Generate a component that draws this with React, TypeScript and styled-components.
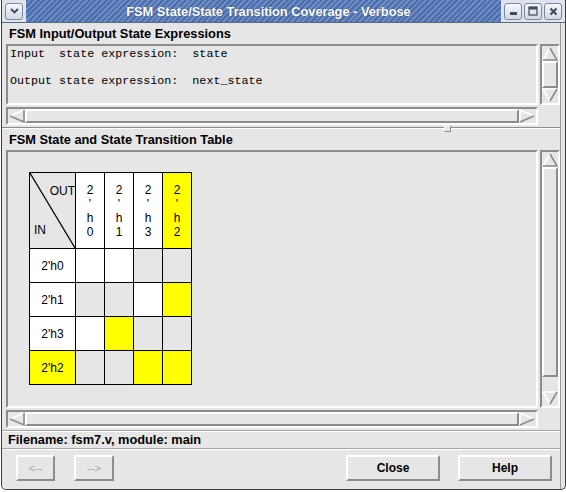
import * as React from 'react';
import styled, { createGlobalStyle } from 'styled-components';

const bg = '#e6e6e6';
const shade = '#8c8c8c';
const light = '#ffffff';
const yellow = '#ffff00';

type Tone = 'white' | 'grey' | 'yellow';
const tones: Record<Tone, string> = { white: '#ffffff', grey: bg, yellow };

const GlobalStyle = createGlobalStyle`
  html, body { margin: 0; padding: 0; background: #ffffff; }
  body { font-family: "Liberation Sans", Arial, sans-serif; }
`;

const Window = styled.div`
  box-sizing: border-box;
  width: 565px;
  height: 490px;
  margin-left: 1px;
  background: ${bg};
  border: 1px solid #3d3d3d;
  border-top: none;
  border-radius: 0 0 5px 5px;
  display: flex;
  flex-direction: column;
  overflow: hidden;
`;

const TitleBar = styled.div`
  box-sizing: border-box;
  height: 23px;
  display: flex;
  background: #dfe4ec;
  border-bottom: 1px solid #5a6884;
`;

const MenuSlot = styled.div`
  width: 24px;
  display: flex;
  align-items: center;
  justify-content: center;
`;

const TitleStripes = styled.div`
  flex: 1;
  display: flex;
  align-items: center;
  justify-content: center;
  padding-left: 10px;
  background: repeating-linear-gradient(135deg, #4c6dab 0 2px, #6d8cc4 2px 4px);
  color: #ffffff;
  font: bold 12.8px "Liberation Sans", Arial, sans-serif;
  text-shadow: 0 0 1px #2c3f66;
`;

const WinButtons = styled.div`
  display: flex;
  align-items: center;
  gap: 2px;
  padding: 0 3px 0 3px;
`;

const WinButton = styled.div`
  box-sizing: border-box;
  width: 18px;
  height: 17px;
  border: 1px solid #7b88a1;
  border-radius: 3px;
  background: linear-gradient(#f5f7fa, #d3d9e4);
  display: flex;
  align-items: center;
  justify-content: center;
`;

const Content = styled.div`
  flex: 1;
  display: flex;
  flex-direction: column;
  margin-right: 4px;
  border-right: 1px solid #9a9a9a;
`;

const SectionLabel = styled.div<{ $h: number; $lift?: number }>`
  box-sizing: border-box;
  height: ${(p) => p.$h}px;
  display: flex;
  align-items: center;
  padding-left: 7px;
  padding-bottom: ${(p) => p.$lift ?? 0}px;
  font: bold 12.8px "Liberation Sans", Arial, sans-serif;
  color: #000000;
`;

const ScrollArea = styled.div<{ $boxHeight: number }>`
  display: grid;
  grid-template-columns: 1fr 20px;
  grid-template-rows: ${(p) => p.$boxHeight}px 18px;
  gap: 2px;
  padding-left: 4px;
`;

const Sunken = styled.div`
  box-sizing: border-box;
  border: 2px solid;
  border-color: ${shade} ${light} ${light} ${shade};
  background: ${bg};
  overflow: hidden;
`;

const TextBox = styled(Sunken)`
  padding: 2px 2px;
  font: 11.7px "Liberation Mono", "Courier New", monospace;
  line-height: 13.5px;
  white-space: pre;
  color: #000000;
`;

const TableBox = styled(Sunken)`
  padding: 20px 21px;
`;

const VScroll = styled(Sunken)`
  display: flex;
  flex-direction: column;
  align-items: stretch;
  padding: 1px 0;
`;

const HScroll = styled(Sunken)`
  display: flex;
  align-items: stretch;
  padding: 0 1px;
`;

const Thumb = styled.div<{ $grow: number }>`
  box-sizing: border-box;
  flex: ${(p) => p.$grow} 1 0;
  border: 2px solid;
  border-color: ${light} ${shade} ${shade} ${light};
  background: ${bg};
`;

const Gap = styled.div<{ $grow: number }>`
  flex: ${(p) => p.$grow} 1 0;
`;

const Sash = styled.div`
  height: 6px;
  display: flex;
  align-items: center;
`;

const Groove = styled.div<{ $w?: number }>`
  box-sizing: border-box;
  height: 2px;
  flex: ${(p) => (p.$w ? `0 0 ${p.$w}px` : '1')};
  border-top: 1px solid ${shade};
  border-bottom: 1px solid ${light};
`;

const SashHandle = styled.div`
  box-sizing: border-box;
  width: 7px;
  height: 7px;
  border: 1px solid;
  border-color: ${light} ${shade} ${shade} ${light};
  background: ${bg};
`;

const Grid = styled.div`
  display: grid;
  grid-template-columns: 45px repeat(4, 28px);
  grid-template-rows: 75px repeat(4, 33px);
  gap: 1px;
  padding: 1px;
  background: #000000;
  width: max-content;
`;

const Cell = styled.div<{ $tone: Tone }>`
  background: ${(p) => tones[p.$tone]};
  display: flex;
  align-items: center;
  justify-content: center;
  font: 12px "Liberation Sans", Arial, sans-serif;
  color: #000000;
`;

const HeadCell = styled(Cell)`
  flex-direction: column;
  line-height: 14px;
`;

const Corner = styled.div`
  position: relative;
  background: ${bg};
  display: flex;
  flex-direction: column;
  justify-content: space-between;
  padding: 11px 0 11px 4px;
  font: 12px "Liberation Sans", Arial, sans-serif;
  line-height: 14px;
  color: #000000;
`;

const CornerOut = styled.span`
  align-self: flex-end;
`;

const Diagonal = styled.svg`
  position: absolute;
  left: 0;
  top: 0;
`;

const FileBar = styled.div`
  box-sizing: border-box;
  margin-top: 2px;
  height: 19px;
  display: flex;
  align-items: center;
  padding-left: 6px;
  border-top: 1px solid #a6a6a6;
  border-bottom: 1px solid #a6a6a6;
  box-shadow: 0 1px 0 ${light}, inset 0 1px 0 ${light};
  font: bold 12.8px "Liberation Sans", Arial, sans-serif;
  color: #000000;
`;

const ButtonRow = styled.div`
  flex: 1;
  display: flex;
  align-items: flex-start;
  padding: 6px 8px 0 14px;
`;

const Button = styled.div<{ $w: number; $disabled?: boolean; $ml?: number }>`
  box-sizing: border-box;
  width: ${(p) => p.$w}px;
  height: 26px;
  margin-left: ${(p) => p.$ml ?? 0}px;
  display: flex;
  align-items: center;
  justify-content: center;
  border: 2px solid;
  border-color: ${light} ${shade} ${shade} ${light};
  background: ${bg};
  font: ${(p) => (p.$disabled ? '11px' : 'bold 12px')} "Liberation Sans", Arial, sans-serif;
  color: ${(p) => (p.$disabled ? '#a4a4a4' : '#000000')};
`;

const Spacer = styled.div`
  flex: 1;
`;

function Arrow({ dir }: { dir: 'up' | 'down' | 'left' | 'right' }) {
  const w = 16;
  const h = 14;
  let lightPts = '';
  let darkPts = '';
  if (dir === 'up') {
    lightPts = '1,13 8,1';
    darkPts = '8,1 15,13 1,13';
  } else if (dir === 'down') {
    lightPts = '8,13 1,1 15,1';
    darkPts = '15,1 8,13';
  } else if (dir === 'left') {
    lightPts = '1,7 15,1';
    darkPts = '15,1 15,13 1,7';
  } else {
    lightPts = '15,7 1,1 1,13';
    darkPts = '1,13 15,7';
  }
  return (
    <svg width={w} height={h} viewBox={`0 0 ${w} ${h}`} style={{ flex: 'none', display: 'block' }}>
      <polyline points={lightPts} fill="none" stroke={light} strokeWidth="1.6" />
      <polyline points={darkPts} fill="none" stroke={shade} strokeWidth="1.6" />
    </svg>
  );
}

function VerticalBar({ thumb, rest }: { thumb: number; rest: number }) {
  return (
    <VScroll>
      <Arrow dir="up" />
      <Thumb $grow={thumb} />
      {rest > 0 && <Gap $grow={rest} />}
      <Arrow dir="down" />
    </VScroll>
  );
}

function HorizontalBar() {
  return (
    <HScroll>
      <Arrow dir="left" />
      <Thumb $grow={1} />
      <Arrow dir="right" />
    </HScroll>
  );
}

const columns: { label: string; tone: Tone }[] = [
  { label: "2'h0", tone: 'white' },
  { label: "2'h1", tone: 'white' },
  { label: "2'h3", tone: 'white' },
  { label: "2'h2", tone: 'yellow' },
];

const rows: { label: string; tone: Tone; cells: Tone[] }[] = [
  { label: "2'h0", tone: 'white', cells: ['white', 'white', 'grey', 'grey'] },
  { label: "2'h1", tone: 'white', cells: ['grey', 'grey', 'white', 'yellow'] },
  { label: "2'h3", tone: 'white', cells: ['white', 'yellow', 'grey', 'grey'] },
  { label: "2'h2", tone: 'yellow', cells: ['grey', 'grey', 'yellow', 'yellow'] },
];

function TransitionTable() {
  return (
    <Grid>
      <Corner>
        <Diagonal width="45" height="75" viewBox="0 0 45 75">
          <line x1="0" y1="0" x2="45" y2="75" stroke="#000" strokeWidth="1.2" />
        </Diagonal>
        <CornerOut>OUT</CornerOut>
        <span>IN</span>
      </Corner>
      {columns.map((c) => (
        <HeadCell key={c.label} $tone={c.tone}>
          {c.label.split('').map((ch, i) => (
            <span key={i}>{ch}</span>
          ))}
        </HeadCell>
      ))}
      {rows.map((r) => (
        <React.Fragment key={r.label}>
          <Cell $tone={r.tone}>{r.label}</Cell>
          {r.cells.map((t, i) => (
            <Cell key={i} $tone={t} />
          ))}
        </React.Fragment>
      ))}
    </Grid>
  );
}

export default function App() {
  return (
    <>
      <GlobalStyle />
      <Window>
        <TitleBar>
          <MenuSlot>
            <WinButton>
              <svg width="9" height="6" viewBox="0 0 9 6">
                <polyline points="1,1 4.5,4.5 8,1" fill="none" stroke="#3f4a5e" strokeWidth="1.8" />
              </svg>
            </WinButton>
          </MenuSlot>
          <TitleStripes>FSM State/State Transition Coverage - Verbose</TitleStripes>
          <WinButtons>
            <WinButton>
              <svg width="9" height="9" viewBox="0 0 9 9">
                <rect x="1" y="5" width="7" height="3" fill="#3f4a5e" />
              </svg>
            </WinButton>
            <WinButton>
              <svg width="10" height="10" viewBox="0 0 10 10">
                <rect x="1" y="1" width="8" height="8" fill="none" stroke="#3f4a5e" strokeWidth="1.2" />
                <rect x="1" y="1" width="8" height="2.5" fill="#3f4a5e" />
              </svg>
            </WinButton>
            <WinButton>
              <svg width="9" height="9" viewBox="0 0 9 9">
                <path d="M1.5 1.5 L7.5 7.5 M7.5 1.5 L1.5 7.5" stroke="#3f4a5e" strokeWidth="2" />
              </svg>
            </WinButton>
          </WinButtons>
        </TitleBar>
        <Content>
          <SectionLabel $h={21}>FSM Input/Output State Expressions</SectionLabel>
          <ScrollArea $boxHeight={61}>
            <TextBox>{'Input  state expression:  state\n\nOutput state expression:  next_state'}</TextBox>
            <VerticalBar thumb={1} rest={0} />
            <HorizontalBar />
          </ScrollArea>
          <Sash>
            <Groove />
            <SashHandle />
            <Groove $w={109} />
          </Sash>
          <SectionLabel $h={19} $lift={3}>FSM State and State Transition Table</SectionLabel>
          <ScrollArea $boxHeight={258}>
            <TableBox>
              <TransitionTable />
            </TableBox>
            <VerticalBar thumb={15} rest={1} />
            <HorizontalBar />
          </ScrollArea>
          <FileBar>Filename: fsm7.v, module: main</FileBar>
          <ButtonRow>
            <Button $w={39} $disabled>&lt;--</Button>
            <Button $w={40} $disabled $ml={19}>--&gt;</Button>
            <Spacer />
            <Button $w={94}>Close</Button>
            <Button $w={94} $ml={18}>Help</Button>
          </ButtonRow>
        </Content>
      </Window>
    </>
  );
}
